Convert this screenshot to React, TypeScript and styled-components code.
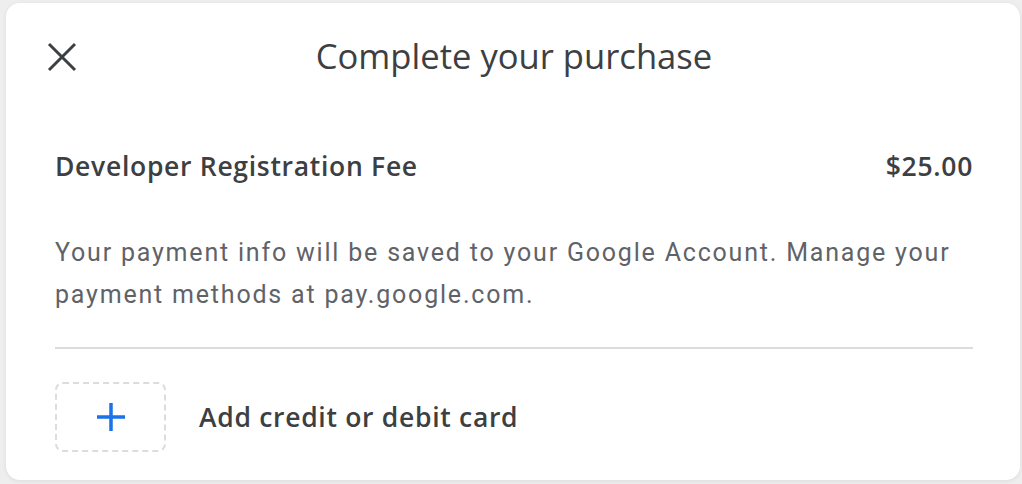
import styled, { createGlobalStyle } from "styled-components";

const Global = createGlobalStyle`
  html, body {
    margin: 0;
    padding: 0;
    background: #eeeeee;
    overflow: hidden;
  }
  * {
    box-sizing: border-box;
  }
`;

const Page = styled.div`
  width: 1022px;
  height: 484px;
  padding: 3px 2px 0 6px;
  font-family: Roboto, "Noto Sans", sans-serif;
`;

const Card = styled.div`
  height: 477px;
  background: #fff;
  border-radius: 14px;
  box-shadow: 0 1px 4px rgba(0, 0, 0, 0.08);
  padding: 29px 47px 0 49px;
  display: flex;
  flex-direction: column;
`;

const Header = styled.div`
  display: grid;
  grid-template-columns: 60px 1fr 60px;
  align-items: center;
  height: 48px;
`;

const CloseButton = styled.button`
  width: 30px;
  height: 30px;
  padding: 0;
  margin: 2px 0 0 -8px;
  border: none;
  background: none;
  display: flex;
  align-items: center;
  justify-content: center;
  cursor: pointer;
`;

const Title = styled.h1`
  margin: 0;
  text-align: center;
  font-family: "Open Sans", Roboto, sans-serif;
  font-size: 34.6px;
  line-height: 48px;
  font-weight: 400;
  color: #3c4043;
`;

const ItemRow = styled.div`
  display: flex;
  justify-content: space-between;
  align-items: center;
  margin-top: 68px;
  height: 36px;
  font-family: "Open Sans", Roboto, sans-serif;
  font-size: 26.5px;
  line-height: 36px;
  font-weight: 600;
  color: #3c4043;
  letter-spacing: 0.7px;
`;

const Notice = styled.p`
  margin: 48px 0 0;
  font-size: 25px;
  line-height: 42px;
  color: #5f6368;
  letter-spacing: 1.8px;
`;

const Divider = styled.hr`
  margin: 31px 0 0;
  border: none;
  border-top: 2px solid #dadce0;
`;

const AddRow = styled.div`
  display: flex;
  align-items: center;
  gap: 33px;
  margin-top: 33px;
`;

const AddBox = styled.div`
  width: 111px;
  height: 70px;
  border: 2px dashed #dadce0;
  border-radius: 8px;
  display: flex;
  align-items: center;
  justify-content: center;
`;

const AddLabel = styled.span`
  font-family: "Open Sans", Roboto, sans-serif;
  font-size: 26.5px;
  font-weight: 600;
  color: #3c4043;
  letter-spacing: 0.7px;
`;

export default function App() {
  return (
    <Page>
      <Global />
      <Card>
        <Header>
          <CloseButton aria-label="Close">
            <svg width="30" height="30" viewBox="0 0 30 30">
              <path
                d="M2 2 L28 28 M28 2 L2 28"
                stroke="#3c4043"
                strokeWidth="3"
              />
            </svg>
          </CloseButton>
          <Title>Complete your purchase</Title>
          <div />
        </Header>
        <ItemRow>
          <span>Developer Registration Fee</span>
          <span>$25.00</span>
        </ItemRow>
        <Notice>
          Your payment info will be saved to your Google Account. Manage your
          <br />
          payment methods at pay.google.com.
        </Notice>
        <Divider />
        <AddRow>
          <AddBox>
            <svg width="30" height="30" viewBox="0 0 30 30">
              <path d="M15 1 V29 M1 15 H29" stroke="#1a73e8" strokeWidth="3.5" />
            </svg>
          </AddBox>
          <AddLabel>Add credit or debit card</AddLabel>
        </AddRow>
      </Card>
    </Page>
  );
}
